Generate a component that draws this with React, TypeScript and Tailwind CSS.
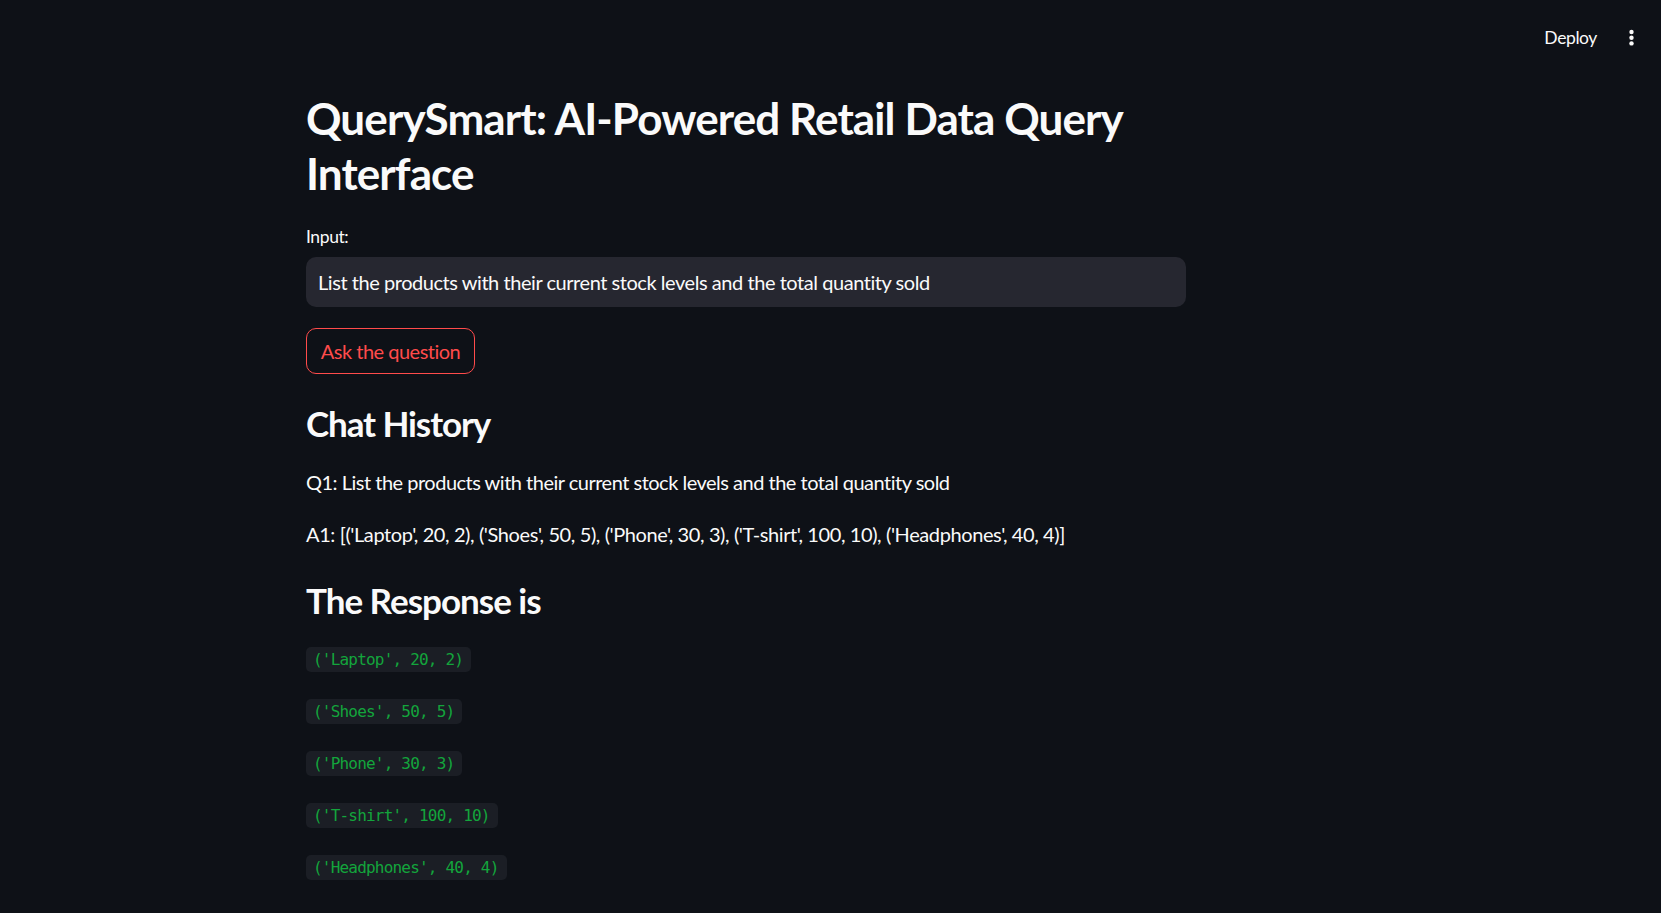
import React from 'react';

const rows: string[] = [
  "('Laptop', 20, 2)",
  "('Shoes', 50, 5)",
  "('Phone', 30, 3)",
  "('T-shirt', 100, 10)",
  "('Headphones', 40, 4)",
];

const question = 'List the products with their current stock levels and the total quantity sold';

const App: React.FC = () => {
  return (
    <div className="min-h-screen bg-[#0e1117] text-[#fafafa] font-['Lato',sans-serif] tracking-[-0.5px]">
      <header className="flex h-[75px] items-center justify-end pr-[26px]">
        <button className="text-[17.5px] leading-[22px] text-[#fafafa] tracking-[-0.4px]">Deploy</button>
        <svg width="7" height="18" viewBox="0 0 7 18" className="ml-[31px]" fill="#fafafa">
          <circle cx="3.5" cy="3" r="2.2" />
          <circle cx="3.5" cy="8.7" r="2.2" />
          <circle cx="3.5" cy="14.4" r="2.2" />
        </svg>
      </header>

      <main className="ml-[306px] flex w-[880px] flex-col pb-10">
        <h2 className="mt-[16px] text-[44px] font-bold leading-[55px] tracking-[-0.9px]">
          QuerySmart: AI-Powered Retail Data Query Interface
        </h2>

        <label className="mt-[25px] text-[17.5px] leading-[22px] tracking-[-0.4px]">Input:</label>
        <div className="mt-[9px] flex h-[50px] items-center rounded-[10px] bg-[#262730] px-[12px] text-[20px] tracking-[-0.45px]">
          {question}
        </div>

        <div className="mt-[21px]">
          <button className="h-[46px] w-[169px] rounded-[10px] border border-[#ff4b4b] text-[20px] text-[#ff4b4b]">
            Ask the question
          </button>
        </div>

        <h3 className="mt-[28px] text-[35px] font-bold leading-[42px] tracking-[-1.1px]">Chat History</h3>
        <p className="mt-[22px] text-[20px] leading-[32px]">Q1: {question}</p>
        <p className="mt-[20px] text-[20px] leading-[32px] tracking-[-0.4px]">
          A1: [('Laptop', 20, 2), ('Shoes', 50, 5), ('Phone', 30, 3), ('T-shirt', 100, 10), ('Headphones', 40, 4)]
        </p>

        <h3 className="mt-[29px] text-[35px] font-bold leading-[42px] tracking-[-1px]">The Response is</h3>
        <div className="mt-[26px] flex flex-col items-start gap-[27px]">
          {rows.map((r) => (
            <code
              key={r}
              className="flex h-[25px] items-center rounded-[5px] bg-[#1b1e25] pl-[7px] pr-[8px] font-['DejaVu_Sans_Mono',monospace] text-[16px] tracking-[-0.8px] text-[#13a53c]"
            >
              {r}
            </code>
          ))}
        </div>
      </main>
    </div>
  );
};

export default App;
